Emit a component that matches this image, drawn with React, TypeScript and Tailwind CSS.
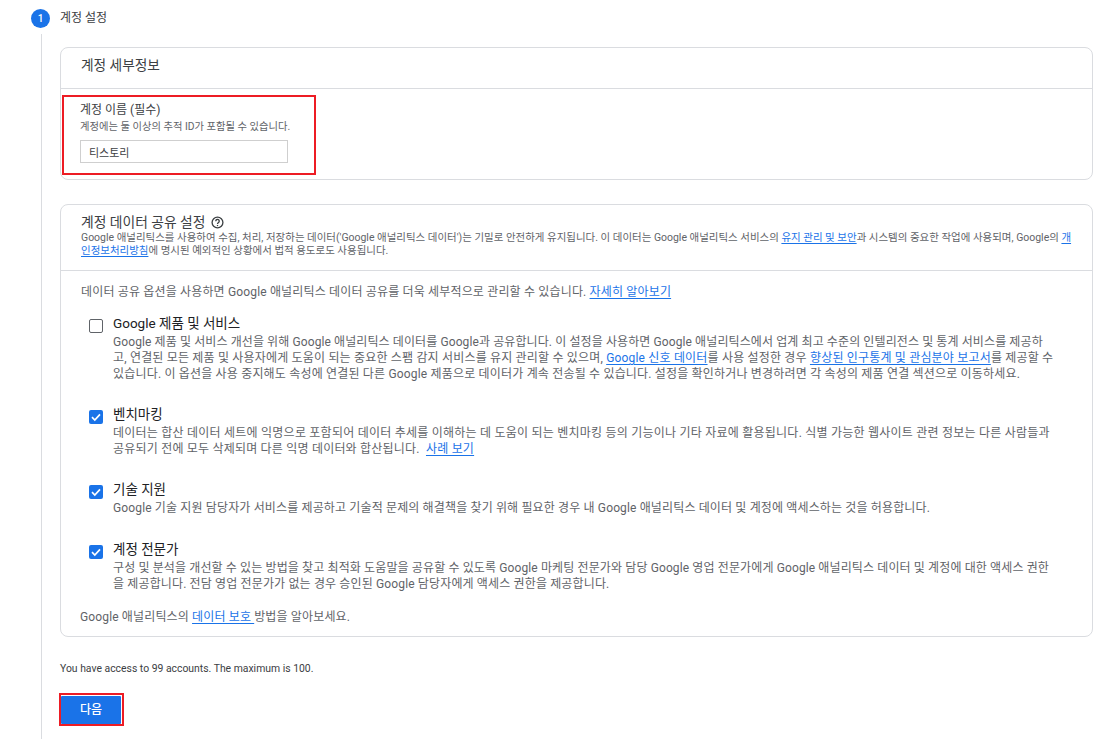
const A = ({ children }: { children: React.ReactNode }) => (
  <a className="text-[#1a73e8] underline underline-offset-2">{children}</a>
);

const Check = ({ on }: { on: boolean }) =>
  on ? (
    <span className="mt-[5px] flex h-[14px] w-[14px] shrink-0 items-center justify-center rounded-[2px] bg-[#1a73e8]">
      <svg viewBox="0 0 14 14" className="h-[14px] w-[14px]">
        <path d="M3 7.2 L5.8 10 L11 4.4" fill="none" stroke="#fff" strokeWidth="1.7" />
      </svg>
    </span>
  ) : (
    <span className="mt-[5px] h-[14px] w-[14px] shrink-0 rounded-[2px] border-[1.5px] border-[#5f6368]" />
  );

const Option = ({ on, title, className, children }: { on: boolean; title: string; className: string; children: React.ReactNode }) => (
  <div className={`flex gap-[10px] pl-[28px] ${className}`}>
    <Check on={on} />
    <div>
      <div className="text-[13.5px] leading-[18px] text-[#202124]">{title}</div>
      <div className="mt-[2px] whitespace-nowrap text-[12px] leading-[16px] text-[#5f6368]">{children}</div>
    </div>
  </div>
);

export default function App() {
  return (
    <div className="h-[739px] w-[1107px] overflow-hidden bg-white text-[#5f6368] [font-family:Roboto,'Noto_Sans_CJK_KR',sans-serif]">
      <div className="flex items-center pl-[31px] pt-[9px]">
        <span className="flex h-[19px] w-[19px] items-center justify-center rounded-full bg-[#1a73e8] text-[10px] font-medium text-white">1</span>
        <span className="ml-[10px] text-[12px] leading-[19px] text-[#3c4043]">계정 설정</span>
      </div>
      <div className="ml-[41px] mt-[6px] h-[705px] border-l border-[#dadce0] pl-[18px] pr-[14px] pt-[13px]">
        <section className="h-[133px] rounded-[8px] border border-[#dadce0]">
          <h2 className="h-[41px] border-b border-[#dadce0] pl-[20px] pt-[8px] text-[13.7px] leading-[18px] font-normal text-[#3c4043]">계정 세부정보</h2>
          <div className="ml-[1px] mt-[6px] h-[80px] w-[254px] border-2 border-[#ed1c24] pl-[16px] pt-[6px]">
            <div className="text-[12px] leading-[15px] text-[#3c4043]">계정 이름 (필수)</div>
            <div className="mt-[2px] text-[10.3px] leading-[14px] text-[#5f6368]">계정에는 둘 이상의 추적 ID가 포함될 수 있습니다.</div>
            <input readOnly value="티스토리" className="mt-[6px] block h-[23px] w-[208px] border border-[#cfcfcf] pl-[8px] text-[11px] text-[#3c4043] outline-none" />
          </div>
        </section>
        <section className="mt-[24px] h-[433px] rounded-[8px] border border-[#dadce0]">
          <div className="h-[66px] border-b border-[#dadce0] pl-[20px] pt-[8px]">
            <div className="flex items-center gap-[5px] text-[13.8px] leading-[18px] text-[#3c4043]">
              계정 데이터 공유 설정
              <svg viewBox="0 0 24 24" className="h-[13px] w-[13px]" fill="none" stroke="#3c4043" strokeWidth="2.4">
                <circle cx="12" cy="12" r="10" />
                <path d="M8.8 9.5a3.2 3.2 0 1 1 5 2.6c-1.1.8-1.8 1.3-1.8 2.7" />
                <path d="M12 16.5v2.2" />
              </svg>
            </div>
            <p className="whitespace-nowrap text-[10.47px] leading-[13px] text-[#5f6368]">
              Google 애널리틱스를 사용하여 수집, 처리, 저장하는 데이터('Google 애널리틱스 데이터')는 기밀로 안전하게 유지됩니다. 이 데이터는 Google 애널리틱스 서비스의 <A>유지 관리 및 보안</A>과 시스템의 중요한 작업에 사용되며, Google의 <A>개</A>
              <br />
              <A>인정보처리방침</A>에 명시된 예외적인 상황에서 법적 용도로도 사용됩니다.
            </p>
          </div>
          <p className="pl-[20px] pt-[13px] text-[12px] leading-[16px] tracking-[0.16px] text-[#5f6368]">
            데이터 공유 옵션을 사용하면 Google 애널리틱스 데이터 공유를 더욱 세부적으로 관리할 수 있습니다. <A>자세히 알아보기</A>
          </p>
          <Option on={false} title="Google 제품 및 서비스" className="mt-[14px]">
            <span className="tracking-[0.1px]">Google 제품 및 서비스 개선을 위해 Google 애널리틱스 데이터를 Google과 공유합니다. 이 설정을 사용하면 Google 애널리틱스에서 업계 최고 수준의 인텔리전스 및 통계 서비스를 제공하</span>
            <br />
            <span className="tracking-[0.18px]">고, 연결된 모든 제품 및 사용자에게 도움이 되는 중요한 스팸 감지 서비스를 유지 관리할 수 있으며, <A>Google 신호 데이터</A>를 사용 설정한 경우 <A>향상된 인구통계 및 관심분야 보고서</A>를 제공할 수</span>
            <br />
            <span className="tracking-[0.18px]">있습니다. 이 옵션을 사용 중지해도 속성에 연결된 다른 Google 제품으로 데이터가 계속 전송될 수 있습니다. 설정을 확인하거나 변경하려면 각 속성의 제품 연결 섹션으로 이동하세요.</span>
          </Option>
          <Option on title="벤치마킹" className="mt-[23px]">
            <span className="tracking-[0.23px]">데이터는 합산 데이터 세트에 익명으로 포함되어 데이터 추세를 이해하는 데 도움이 되는 벤치마킹 등의 기능이나 기타 자료에 활용됩니다. 식별 가능한 웹사이트 관련 정보는 다른 사람들과</span>
            <br />
            <span className="tracking-[0.2px]">공유되기 전에 모두 삭제되며 다른 익명 데이터와 합산됩니다. &nbsp;<A>사례 보기</A></span>
          </Option>
          <Option on title="기술 지원" className="mt-[23px]">
            <span className="tracking-[0.14px]">Google 기술 지원 담당자가 서비스를 제공하고 기술적 문제의 해결책을 찾기 위해 필요한 경우 내 Google 애널리틱스 데이터 및 계정에 액세스하는 것을 허용합니다.</span>
          </Option>
          <Option on title="계정 전문가" className="mt-[24px]">
            <span className="tracking-[0.12px]">구성 및 분석을 개선할 수 있는 방법을 찾고 최적화 도움말을 공유할 수 있도록 Google 마케팅 전문가와 담당 Google 영업 전문가에게 Google 애널리틱스 데이터 및 계정에 대한 액세스 권한</span>
            <br />
            <span className="tracking-[0.14px]">을 제공합니다. 전담 영업 전문가가 없는 경우 승인된 Google 담당자에게 액세스 권한을 제공합니다.</span>
          </Option>
          <p className="pl-[19px] pt-[17px] text-[12px] leading-[16px] tracking-[0.14px] text-[#5f6368]">
            Google 애널리틱스의 <A>데이터 보호 </A>방법을 알아보세요.
          </p>
        </section>
        <p className="mt-[25px] text-[10.4px] leading-[14px] text-[#3c4043]">You have access to 99 accounts. The maximum is 100.</p>
        <div className="-ml-[1px] mt-[17px] h-[33px] w-[65px] border-2 border-[#ed1c24] pr-px pt-px">
          <button className="block h-[28px] w-[60px] rounded-[1px] bg-[#1a73e8] text-[12px] font-medium text-white">다음</button>
        </div>
      </div>
    </div>
  );
}
